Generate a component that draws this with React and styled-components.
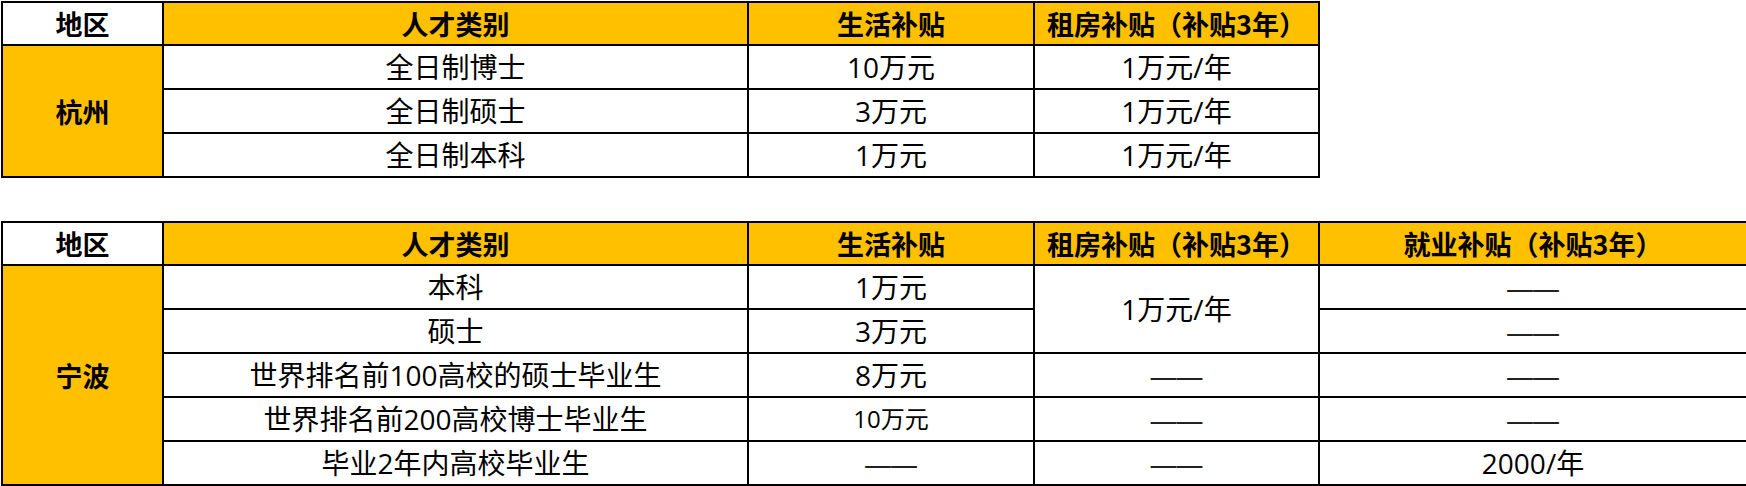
import React from 'react';
import styled, { createGlobalStyle } from 'styled-components';

const GlobalStyle = createGlobalStyle`
  html, body {
    margin: 0;
    padding: 0;
    background: #fff;
  }
  body {
    font-family: "Open Sans", "Noto Sans CJK SC", "Microsoft YaHei", sans-serif;
    color: #000;
  }
`;

const YELLOW = '#FFC000';

const Page = styled.div`
  display: flex;
  flex-direction: column;
  gap: 43px;
  padding: 1px 0 0 1px;
`;

const Table = styled.table`
  border-collapse: collapse;
  table-layout: fixed;
  width: ${p => p.$width}px;
`;

const HeadRow = styled.tr`
  height: 43px;
`;

const Row = styled.tr`
  height: 44px;
`;

const HeadCell = styled.th`
  border: 2px solid #000;
  padding: 0;
  background: ${p => (p.$plain ? '#fff' : YELLOW)};
  font-family: "Noto Sans CJK SC", "Microsoft YaHei", sans-serif;
  font-size: 27px;
  font-weight: 700;
  line-height: 1.1;
  text-align: center;
  vertical-align: middle;
  white-space: nowrap;
`;

const RegionCell = styled.td`
  border: 2px solid #000;
  padding: 0;
  background: ${YELLOW};
  font-family: "Noto Sans CJK SC", "Microsoft YaHei", sans-serif;
  font-size: 27px;
  font-weight: 700;
  text-align: center;
  vertical-align: middle;
`;

const Cell = styled.td`
  border: 2px solid #000;
  padding: 0;
  background: #fff;
  font-size: ${p => (p.$small ? '24px' : '28px')};
  font-weight: 400;
  line-height: 1.1;
  text-align: center;
  vertical-align: middle;
  white-space: nowrap;
`;

const Dash = styled.span`
  display: inline-block;
  letter-spacing: -2px;
  padding-right: 2px;
  color: #222;
`;

const DASH = <Dash>——</Dash>;

const hangzhou = [
  { cat: '全日制博士', life: '10万元', rent: '1万元/年' },
  { cat: '全日制硕士', life: '3万元', rent: '1万元/年' },
  { cat: '全日制本科', life: '1万元', rent: '1万元/年' },
];

const ningbo = [
  { cat: '本科', life: '1万元', rent: '1万元/年', rentSpan: 2, job: DASH },
  { cat: '硕士', life: '3万元', job: DASH },
  { cat: '世界排名前100高校的硕士毕业生', life: '8万元', rent: DASH, job: DASH },
  { cat: '世界排名前200高校博士毕业生', life: '10万元', small: true, rent: DASH, job: DASH },
  { cat: '毕业2年内高校毕业生', life: DASH, rent: DASH, job: '2000/年' },
];

const Cols = ({ widths }) => (
  <colgroup>
    {widths.map((w, i) => (
      <col key={i} style={{ width: w }} />
    ))}
  </colgroup>
);

export default function App() {
  return (
    <>
      <GlobalStyle />
      <Page>
        <Table $width={1317}>
          <Cols widths={[161, 585, 286, 285]} />
          <thead>
            <HeadRow>
              <HeadCell $plain>地区</HeadCell>
              <HeadCell>人才类别</HeadCell>
              <HeadCell>生活补贴</HeadCell>
              <HeadCell>租房补贴（补贴3年）</HeadCell>
            </HeadRow>
          </thead>
          <tbody>
            {hangzhou.map((r, i) => (
              <Row key={r.cat}>
                {i === 0 && <RegionCell rowSpan={hangzhou.length}>杭州</RegionCell>}
                <Cell>{r.cat}</Cell>
                <Cell>{r.life}</Cell>
                <Cell>{r.rent}</Cell>
              </Row>
            ))}
          </tbody>
        </Table>

        <Table $width={1745}>
          <Cols widths={[161, 585, 286, 285, 428]} />
          <thead>
            <HeadRow>
              <HeadCell $plain>地区</HeadCell>
              <HeadCell>人才类别</HeadCell>
              <HeadCell>生活补贴</HeadCell>
              <HeadCell>租房补贴（补贴3年）</HeadCell>
              <HeadCell>就业补贴（补贴3年）</HeadCell>
            </HeadRow>
          </thead>
          <tbody>
            {ningbo.map((r, i) => (
              <Row key={r.cat}>
                {i === 0 && <RegionCell rowSpan={ningbo.length}>宁波</RegionCell>}
                <Cell>{r.cat}</Cell>
                <Cell $small={r.small}>{r.life}</Cell>
                {r.rent && <Cell rowSpan={r.rentSpan || 1}>{r.rent}</Cell>}
                <Cell>{r.job}</Cell>
              </Row>
            ))}
          </tbody>
        </Table>
      </Page>
    </>
  );
}
